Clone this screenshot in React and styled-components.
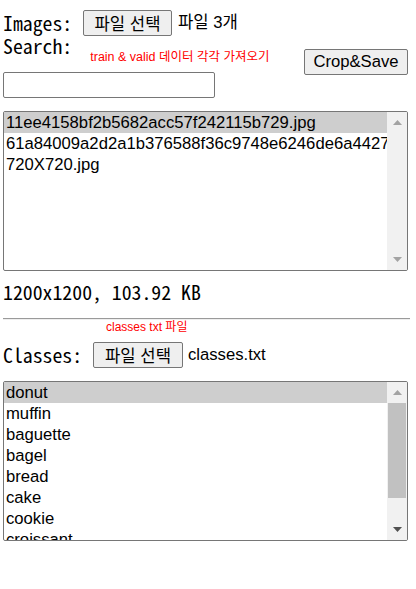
import React from 'react';
import styled, { createGlobalStyle } from 'styled-components';

const Global = createGlobalStyle`
  html, body { margin: 0; padding: 0; background: #fff; }
  body {
    font-family: "Liberation Sans", "Noto Sans CJK KR", sans-serif;
    font-size: 16.67px;
    color: #000;
  }
`;

const mono = `"Noto Sans Mono CJK KR", "DejaVu Sans Mono", monospace`;

const Page = styled.div`
  width: 416px;
  height: 589px;
  box-sizing: border-box;
  padding: 10px 8px 0 3px;
  display: flex;
  flex-direction: column;
  overflow: hidden;
`;

const FileRow = styled.div`
  display: flex;
  align-items: center;
  height: 26px;
  margin-top: ${(p) => p.$mt || 0}px;
`;

const MonoLabel = styled.span`
  font-family: ${mono};
  font-size: 19.8px;
  line-height: 20px;
  white-space: pre;
  flex: none;
  width: ${(p) => (p.$w ? `${p.$w}px` : 'auto')};
`;

const Button = styled.button`
  box-sizing: border-box;
  height: 26px;
  width: ${(p) => p.$w}px;
  padding: 0;
  margin: ${(p) => p.$m || 0};
  background: #efefef;
  border: 1px solid #767676;
  border-radius: 2px;
  font-family: "Liberation Sans", "Noto Sans CJK KR", sans-serif;
  font-size: 16.67px;
  color: #000;
  flex: none;
`;

const FileName = styled.span`
  margin-left: ${(p) => p.$ml}px;
  font-size: 16.67px;
  line-height: 20px;
  white-space: nowrap;
`;

const SearchBlock = styled.div`
  display: flex;
  justify-content: space-between;
  align-items: flex-start;
`;

const SearchLeft = styled.div`
  display: flex;
  flex-direction: column;
`;

const LabelLine = styled.div`
  display: flex;
  align-items: flex-start;
`;

const Note = styled.span`
  color: #ff0000;
  font-size: ${(p) => p.$fs || 12}px;
  line-height: 14px;
  white-space: nowrap;
  margin-top: ${(p) => p.$mt || 0}px;
  margin-left: ${(p) => p.$ml || 0}px;
  padding-left: ${(p) => p.$pl || 0}px;
`;

const SearchInput = styled.input`
  box-sizing: border-box;
  width: 212px;
  height: 26px;
  margin: 8px 0 0 0;
  border: 1px solid #767676;
  border-radius: 2px;
  background: #fff;
  padding: 0 3px;
  font-size: 13px;
`;

const ListBox = styled.div`
  box-sizing: border-box;
  width: 405px;
  height: 160px;
  margin-top: 13px;
  border: 1px solid #767676;
  border-radius: 2px;
  display: flex;
  overflow: hidden;
  flex: none;
`;

const Items = styled.div`
  flex: 1;
  min-width: 0;
  overflow: hidden;
`;

const Item = styled.div`
  height: 21px;
  line-height: 21px;
  padding-left: 2px;
  white-space: nowrap;
  overflow: hidden;
  font-size: 16.67px;
  background: ${(p) => (p.$selected ? '#cecece' : 'transparent')};
`;

const ScrollBar = styled.div`
  width: 20px;
  flex: none;
  background: #f1f1f1;
  display: flex;
  flex-direction: column;
`;

const ScrollButton = styled.div`
  height: 21px;
  flex: none;
  display: flex;
  align-items: center;
  justify-content: center;
`;

const Track = styled.div`
  flex: 1;
  display: flex;
  flex-direction: column;
  padding: 0 1px;
`;

const Thumb = styled.div`
  height: ${(p) => p.$h}px;
  background: #c1c1c1;
`;

const SizeText = styled.div`
  font-family: ${mono};
  font-size: 19.8px;
  line-height: 20px;
  margin-top: 11px;
  white-space: pre;
`;

const Rule = styled.hr`
  margin: 16px -2px 0 0;
  border: none;
  border-top: 1px solid #9a9a9a;
  border-bottom: 1px solid #eeeeee;
  height: 0;
`;

const Arrow = ({ dir, color }) => (
  <svg width="9" height="5" viewBox="0 0 9 5">
    {dir === 'up' ? (
      <polygon points="0,5 9,5 4.5,0" fill={color} />
    ) : (
      <polygon points="0,0 9,0 4.5,5" fill={color} />
    )}
  </svg>
);

const List = ({ items, thumb, upColor, downColor }) => (
  <ListBox>
    <Items>
      {items.map((t, i) => (
        <Item key={t} $selected={i === 0}>
          {t}
        </Item>
      ))}
    </Items>
    <ScrollBar>
      <ScrollButton>
        <Arrow dir="up" color={upColor} />
      </ScrollButton>
      <Track>{thumb ? <Thumb $h={thumb} /> : null}</Track>
      <ScrollButton>
        <Arrow dir="down" color={downColor} />
      </ScrollButton>
    </ScrollBar>
  </ListBox>
);

export default function App() {
  return (
    <>
      <Global />
      <Page>
        <FileRow>
          <MonoLabel $w={80}>Images:</MonoLabel>
          <Button $w={89}>파일 선택</Button>
          <FileName $ml={6}>파일 3개</FileName>
        </FileRow>
        <SearchBlock>
          <SearchLeft>
            <LabelLine>
              <MonoLabel>Search:</MonoLabel>
              <Note $mt={14} $ml={18} $fs={12.5}>
                train &amp; valid 데이터 각각 가져오기
              </Note>
            </LabelLine>
            <SearchInput type="text" />
          </SearchLeft>
          <Button $w={104} $m="13px 0 0 0">
            Crop&amp;Save
          </Button>
        </SearchBlock>
        <List
          items={[
            '11ee4158bf2b5682acc57f242115b729.jpg',
            '61a84009a2d2a1b376588f36c9748e6246de6a4427.jpg',
            '720X720.jpg',
          ]}
          upColor="#a3a3a3"
          downColor="#a3a3a3"
        />
        <SizeText>1200x1200, 103.92 KB</SizeText>
        <Rule />
        <Note $pl={103}>classes txt 파일</Note>
        <FileRow $mt={8}>
          <MonoLabel $w={90}>Classes:</MonoLabel>
          <Button $w={90}>파일 선택</Button>
          <FileName $ml={5}>classes.txt</FileName>
        </FileRow>
        <List
          items={[
            'donut',
            'muffin',
            'baguette',
            'bagel',
            'bread',
            'cake',
            'cookie',
            'croissant',
            'pretzel',
          ]}
          thumb={95}
          upColor="#a3a3a3"
          downColor="#505050"
        />
      </Page>
    </>
  );
}
